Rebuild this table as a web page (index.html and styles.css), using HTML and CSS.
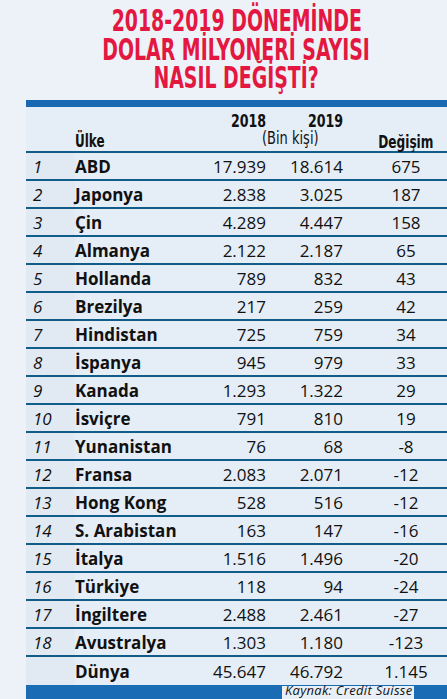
FILE: index.html
```html
<!DOCTYPE html>
<html lang="tr">
<head>
    <meta charset="UTF-8">
    <meta name="viewport" content="width=device-width, initial-scale=1.0">
    <title>Dolar milyoneri sayısı</title>
    <link rel="stylesheet" href="styles.css">
</head>
<body>
    <div class="panel">
        <h1 class="title">
            <span>2018-2019 DÖNEMİNDE</span>
            <span>DOLAR MİLYONERİ SAYISI</span>
            <span>NASIL DEĞİŞTİ?</span>
        </h1>
        <div class="top-bar"></div>

        <div class="head-row">
            <span class="h-2018"><span class="narrow">2018</span></span>
            <span class="h-2019"><span class="narrow">2019</span></span>
            <span class="h-country"><span class="narrow">Ülke</span></span>
            <span class="h-unit"><span class="narrow">(Bin kişi)</span></span>
            <span class="h-change"><span class="narrow">Değişim</span></span>
        </div>

        <div class="rows" id="rows"></div>

        <div class="bottom-bar">
            <span class="source">Kaynak: Credit Suisse</span>
        </div>
    </div>

    <script>
        const data = [
            ['1', 'ABD', '17.939', '18.614', '675'],
            ['2', 'Japonya', '2.838', '3.025', '187'],
            ['3', 'Çin', '4.289', '4.447', '158'],
            ['4', 'Almanya', '2.122', '2.187', '65'],
            ['5', 'Hollanda', '789', '832', '43'],
            ['6', 'Brezilya', '217', '259', '42'],
            ['7', 'Hindistan', '725', '759', '34'],
            ['8', 'İspanya', '945', '979', '33'],
            ['9', 'Kanada', '1.293', '1.322', '29'],
            ['10', 'İsviçre', '791', '810', '19'],
            ['11', 'Yunanistan', '76', '68', '-8'],
            ['12', 'Fransa', '2.083', '2.071', '-12'],
            ['13', 'Hong Kong', '528', '516', '-12'],
            ['14', 'S. Arabistan', '163', '147', '-16'],
            ['15', 'İtalya', '1.516', '1.496', '-20'],
            ['16', 'Türkiye', '118', '94', '-24'],
            ['17', 'İngiltere', '2.488', '2.461', '-27'],
            ['18', 'Avustralya', '1.303', '1.180', '-123'],
            ['', 'Dünya', '45.647', '46.792', '1.145']
        ];

        const rows = document.getElementById('rows');
        rows.innerHTML = data.map(r => `
            <div class="row">
                <span class="rank">${r[0]}</span>
                <span class="country">${r[1]}</span>
                <span class="num">${r[2]}</span>
                <span class="num">${r[3]}</span>
                <span class="change">${r[4]}</span>
            </div>`).join('');
    </script>
</body>
</html>
```

FILE: styles.css
```css
* {
    margin: 0;
    padding: 0;
    box-sizing: border-box;
}

body {
    background-color: #edf2f8;
    font-family: "Open Sans", "Noto Sans", sans-serif;
    color: #111;
    width: 447px;
    height: 699px;
    overflow: hidden;
}

.panel {
    margin-left: 26px;
    background-color: #e5edf6;
    height: 699px;
    display: flex;
    flex-direction: column;
}

/* title: condensed bold, squeezed to match the poster face */
.title {
    font-family: "DejaVu Sans Condensed", "DejaVu Sans", sans-serif;
    font-weight: bold;
    font-size: 30px;
    line-height: 28.5px;
    color: #e3173f;
    text-align: center;
    padding-top: 7px;
    height: 100px;
    margin-left: -26px;
    padding-left: 26px;
    background-color: #edf2f8;
    display: flex;
    flex-direction: column;
    align-items: center;
}

.title span {
    display: block;
    transform: scaleX(0.7);
    white-space: nowrap;
}

.top-bar {
    height: 7px;
    background-color: #1868b2;
}

.head-row {
    display: grid;
    grid-template-columns: 49px 115px 76px 77px 1fr;
    grid-template-rows: 22px 22px;
    height: 46px;
    font-family: "DejaVu Sans Condensed", "DejaVu Sans", sans-serif;
    font-weight: bold;
    font-size: 18px;
    border-bottom: 2px solid #0f5d88;
}

.narrow {
    display: inline-block;
    transform: scaleX(0.78);
    white-space: nowrap;
}

.h-2018,
.h-2019 {
    grid-row: 1;
    text-align: right;
    line-height: 18px;
    padding-top: 5px;
}

.h-2018 {
    grid-column: 3;
}

.h-2019 {
    grid-column: 4;
}

.h-2018 .narrow,
.h-2019 .narrow {
    transform-origin: right center;
}

.h-country {
    grid-row: 2;
    grid-column: 2;
    line-height: 18px;
    padding-top: 3px;
}

.h-country .narrow {
    transform-origin: left center;
    transform: scaleX(0.74);
}

.h-unit {
    grid-row: 2;
    grid-column: 3 / 5;
    font-weight: normal;
    font-size: 17px;
    line-height: 16px;
    text-align: center;
    padding-left: 48px;
    padding-top: 1px;
}

.h-unit .narrow {
    transform: scaleX(0.85);
}

.h-change {
    grid-row: 2;
    grid-column: 5;
    text-align: center;
    padding-left: 22px;
    line-height: 18px;
    padding-top: 4px;
}

.h-change .narrow {
    transform: scaleX(0.75);
}

.row {
    display: grid;
    grid-template-columns: 49px 115px 76px 77px 1fr;
    align-items: center;
    height: 28px;
    border-bottom: 2px solid #0f5d88;
    font-size: 17px;
}

.row:last-child {
    border-bottom: none;
}

.rank {
    font-style: italic;
    padding-left: 7px;
    background-color: #e1e9f3;
    height: 100%;
    display: flex;
    align-items: center;
}

.country {
    font-weight: bold;
}

.num {
    text-align: right;
}

.change {
    text-align: center;
    padding-left: 22px;
}

.bottom-bar {
    margin-top: auto;
    height: 14px;
    background-color: #1a6db5;
    display: flex;
    align-items: flex-end;
    padding-left: 256px;
}

.source {
    background-color: #e9eff6;
    font-style: italic;
    font-size: 13px;
    letter-spacing: 0.3px;
    line-height: 9px;
    height: 13px;
    padding: 0 2px 0 3px;
    white-space: nowrap;
}
```
